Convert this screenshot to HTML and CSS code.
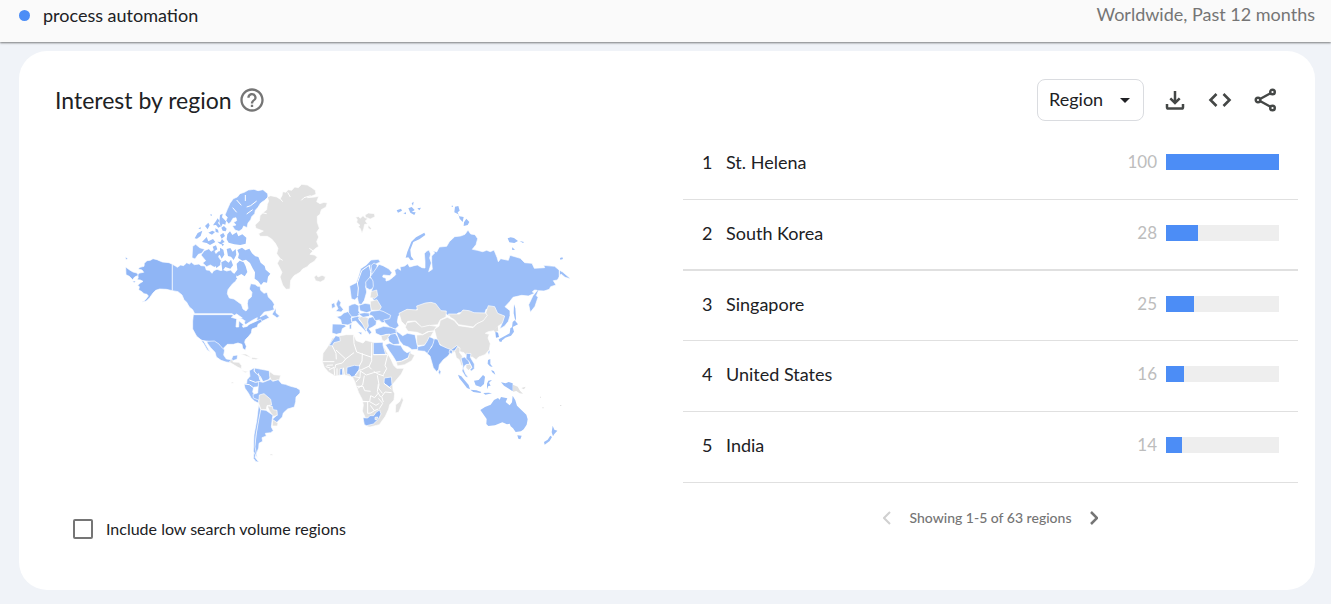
FILE: index.html
```html
<!DOCTYPE html>
<html lang="en">
<head>
<meta charset="utf-8">
<meta name="viewport" content="width=device-width, initial-scale=1">
<title>Interest by region</title>
<link rel="stylesheet" href="styles.css">
</head>
<body>
<header class="topbar">
  <div class="term"><span class="dot"></span>process automation</div>
  <div class="scope">Worldwide, Past 12 months</div>
</header>
<main class="card">
  <div class="card-head">
    <h1 class="title">Interest by region</h1>
    <button class="icon-btn help" aria-label="Help">
      <svg width="28" height="28" viewBox="0 0 24 24" fill="currentColor"><path d="M11 18h2v-2h-2v2zm1-16C6.480 2 2 6.480 2 12s4.480 10 10 10 10-4.480 10-10S17.520 2 12 2zm0 18c-4.410 0-8-3.590-8-8s3.590-8 8-8 8 3.590 8 8-3.590 8-8 8zm0-14c-2.210 0-4 1.790-4 4h2c0-1.100.9-2 2-2s2 .9 2 2c0 2-3 1.750-3 5h2c0-2.250 3-2.500 3-5 0-2.210-1.790-4-4-4z"/></svg>
    </button>
    <div class="tools">
      <div class="select-wrap">
        <select class="select" aria-label="Resolution"><option>Region</option></select>
        <svg class="caret" width="10" height="5" viewBox="0 0 10 5"><path d="M0 0h10L5 5z" fill="#202124"/></svg>
      </div>
      <div class="actions">
        <button class="icon-btn" aria-label="Download">
          <svg width="24" height="24" viewBox="0 0 24 24" fill="none" stroke="currentColor" stroke-width="2.500"><path d="M12 3v12M7.300 10.300l4.700 4.700 4.700-4.700M4 16v3.200q0 1.300 1.300 1.300h13.400q1.300 0 1.300-1.300V16"/></svg>
        </button>
        <button class="icon-btn" aria-label="Embed">
          <svg width="24" height="24" viewBox="0 0 24 24" fill="none" stroke="currentColor" stroke-width="2.600"><path d="M8.500 6l-6 6 6 6M15.500 6l6 6-6 6"/></svg>
        </button>
        <button class="icon-btn" aria-label="Share">
          <svg width="24" height="24" viewBox="0 0 24 24" fill="none" stroke="currentColor" stroke-width="2.400"><circle cx="19.500" cy="4" r="2.300"/><circle cx="5" cy="12" r="2.300"/><circle cx="19.500" cy="20" r="2.300"/><path d="M7 11l10.500-5.800M7 13l10.500 5.800"/></svg>
        </button>
      </div>
    </div>
  </div>
  <div class="panels">
    <section class="map-panel">
      <svg class="map" viewBox="0 0 1350 855" role="img" aria-label="World map">
        <!-- North America -->
        <g class="land" transform="translate(300 -15)">
          <path class="deep" d="M-143 268l-10-5-20-2-16-7-12-3-8 5-10 1-8 8-1 9-12 3-6 5 12 3 5 7-12 2-8 6 4 6-3 8 9 1 8 4-8 5-8 7 5 4-2 10 8 4 8 7 9 2 4 5-10 13-10 6 14-4 10-10 10-14 8-8 12-4 20 1L-143 347z"/>
          <path class="deep" d="M-283 276l12 9 10 6 12 3 4 7-11 5-6 8-10-10-10-5zM-284 245l8 6-6 3zM-262 318l9 0-4 6z"/>
          <path d="M-143 268l8 4 7 5 10-7 9 2 9-9 8 4 6-5 9 7 14-2 6 5 12 1 4 12 9 1 8 9 5-8 10-4 12 4 7-3 10 4 12-3 8 9 11 4 L48 318 38 326 30 336 24 344 22 356 28 369 42 372 53 380 64 388 69 402 78 408 84 400 82 386 84 374 94 366 96 352 88 342 92 326 105 328 113 334 120 334 122 346 132 355 141 352 145 366 157 378 163 388 160 396 163 404 150 408 133 411 120 426 138 418 148 428 132 436 119 442 110 436 112 428 100 434 84 444 76 450 70 434 52 428 36 416 -76 416 -82 404 -92 396 -100 382 -108 374 -114 360 -126 350 -143 347z"/>
          <path d="M156 418l12-19 0 14 11 10-8 6-6-5z"/>
          <path class="deep" d="M-80 419L36 419 50 430 60 440 76 454 92 446 110 438 122 432 126 440 114 448 112 456 96 462 94 474 86 484 76 494 74 502 79 514 76 526 68 520 66 508 54 504 40 508 22 508 12 518 10 530 0 521 -8 508 -18 510 -30 500 -55 496 -70 484 -82 462 -82 438z"/>
          <path class="water" d="M34 427l16-10 17 12-15 3zM50 433l7 0-1 23-8 0zM61 432l15 6-9 6zM67 452l20-6-5 8-13 3z"/>
          <path d="M-84 248l2-34 9-6 12 10 15 5-9 12-10 3-10 14z"/>
          <path d="M-57 240l10-13 14-6 6 8 10-6 4 12 10-4-1 18 8 8-4 13-10 1-7 6-12-7-11 5-12-11 9-7z"/>
          <g class="islets">
            <path d="M-76 190l9-16 14-7-5 16-11 8zM-45 153l10-10 4 8-6 12zM-54 201l14-15 5 13 14-7 7 9-16 9-10-6zM-12 138l5-8 5 7-4 7 9 10-8 4-7-8-9 1zM-35 173l12-6 8 4-9 8zM0 180l10-6 5 9-10 8zM-8 200l9 1 5-9 8 9-13 7zM-22 215l10-4 4 12-9 6zM-14 160l8 4 2 9-9-2zM-65 160l8-3-2 6zM-30 120l4-3 2 6zM-8 232l7-5 2 12-8 4zM2 204l10 4-4 6z"/>
            <path d="M0 120l8-4-2 11 12 12-2 10-8-3-5 10-5-14zM4 158l8-5 8 8-3 8-9-2zM22 178l8-9 7 11 13-8 5 12 12-6 12 10-2 18-16 4-18-2-17-5-6-10zM0 218l10 6 3 15-8 12-5-10zM20 222l11-3 7 11 9-8 2 17-8 16-8-10-9-2zM52 225l14-7 10 8 12-5 8 14 10 9 9 2 7 17 12 10 3 11 14 12-7 9-3 18-10-2-8 9-9-12-10-7 1-19-7-12-8-16-12-10-11 3-13-8 3-12zM50 266l9-9 12 5 6 12 5 17-8 13-10-7-12 7-9-8 9-12zM4 262l12-6 10 7 7-9 6 17-8 10-15-5-9 12zM-20 250l10 4 7-8 4 24-12 9-5-12zM32 305l12-2 8 8-14 8z"/>
          </g>
          <path d="M22 103l8-18 10-14 12-5 8-10 13-4 12-7 17-2 12 4 15-3 14 12 1 10-10 10-12 8-8 13-8 9-2 10-9 9-3 9-8 10-3 14-10-5-4 9-10 7-12-4-8-12 11-3-7-8 9-5-2-9-9 2-6 10-7 7-8-10 4-10-7-7z"/>
          <path class="water thin" d="M50 75l14 16M76 60l0 18M110 78l-18 14-12 4M38 98l12 14M98 104l-18 13"/>
          <path class="none" d="M105 150L118 138 120 122 130 112 140 104 142 88 146 78 142 66 152 62 170 66 180 72 186 62 188 50 198 52 204 44 215 46 224 36 235 38 245 28 262 30 275 38 286 46 288 58 262 68 285 66 296 64 290 80 300 86 312 82 322 84 318 96 304 104 300 118 292 124 292 142 298 160 290 172 296 186 290 200 296 214 284 222 270 238 283 240 292 246 284 258 268 268 262 275 248 282 240 292 222 302 212 316 210 342 198 343 188 330 180 306 186 292 172 265 180 250 170 236 174 220 166 205 155 192 142 184 120 184 116 176 130 168 108 160z"/>
          <path class="water thin" d="M176 66l12 14M203 52l8 14M272 62l-20 6-8 8M280 228l-12-8M178 250l10 6M120 112l20 4"/>
          <path class="none" d="M282 306l8-6 4 6 12-5 10 4-2 9-13 7-14-4z"/>
        </g>
        <!-- Mexico, Central and South America -->
        <g class="land" transform="translate(210 480)">
          <path d="M50 4l23-1 14 9 6 8 11 10-3 15 8 12 15 2 5-12 14-2-2 13-10 3-7 7-16-2-15-5-14-10-4-14-13-14-9-12zM33 0l8 3 9 16 11 18-10-8-9-16z"/>
          <path class="none" d="M118 66l8-8 4 8 17 1 8 10-1 9-10-4-10-6zM153 91l14 3 9 0-10 4zM152 42l16 0 18 12-16-5zM186 52l20 3-8 4-14-2z"/>
          <path d="M178 92l15-9-1 11 9 7 11 6-1 16-6 17-14 2-3 14 7 9 11 5 1 20-13-6-11-11-8-14-10-14-3-13 8-2 1-11 9-10z"/>
          <path d="M194 84l20 4 23 4 7 15-8 12-17 6-8-16-11-7-7-9z"/>
          <path class="none" d="M238 94l14 10 20 2-4 14-23 3-6-13z"/>
          <path d="M206 124l13 3 23-9 6 6 17-5 10 12 11 2 16 6 17 4 11 7 0 9-12 12-1 14-4 16-20 6-13 12-3 12-13 13-5 5-12-11 13-12-2-10-12-7-5-12-16-15-20-2-15-6-1-11 14-4z"/>
          <path class="none" d="M208 165l14-4 20 17 3 17-14 2-2 12-16 0-7-18zM232 198l15 1 2 10 12 2 1 15-12 4-12-18zM247 238l17 12-2 8-15 0z"/>
          <path d="M211 209l17 2 21 15-2 10-2 17-1 8 6 11-8 6-16 2 3 8-13 5 2 11-11 6-1 14-6 15-5 13 8 10 5 4-10-1-8-10 4-38 8-62z"/>
          <path d="M206 194l6 15-6 32-8 44-3 35 5 25 3 10-13-21 2-49 8-43z"/>
          <path class="none" d="M124 126h6v4h-6zM240 342h8v4h-8z"/>
          <path class="border" d="M163 132l15 2 12 9M178 120l18 7 10-2M205 100l5 20"/>
        </g>
        <!-- Arctic islands, Scandinavia and Russia -->
        <g class="land" transform="translate(585 -15)">
          <path class="none" d="M122 126l9-1 5 5 8-8 7 7 9 0-9 9 7 9-9 1-3 13-5 14-5-14-6-6 5-4-10-9 2-8zM150 120l10-6 18 2 2 9-14 7-14-4zM160 150l9 10-2 4-8-5z"/>
          <g class="islets">
            <path d="M245 106l13-5 3 6-12 6zM280 100l10-4 9 9-9 6 12 1-4 8-12-7zM290 85l6-5-2 12zM265 115l8-3 0 6zM307 100l11-2-5 8z"/>
            <path d="M272 248l5-18 12-30 14-13 25-14 3 7-18 13-18 8-9 23 2 20 8 10-9 2-7-9z"/>
          </g>
          <path d="M104 333l20-10 7-21 6-21 18-12 13-14 22-2 6 8-12 5 1 14-11 18-4 13-10 4-8 20 3 16-7 25-9 13-8-3-4-19-8 8-10-4z"/>
          <path d="M168 272l9-8 10 6-1 22 9 29-13 17-18 6-11-6-1-17 13-15 6-14z"/>
          <path class="border" d="M128 364l2-25-3-15 13-37 18-13 8-4M167 310l0-20-4-17M192 266l-6 10"/>
          <path d="M192 268l12 4 18 10 9 11-6 9-20-2-2 6 10 4 0 8 10-3 12-9 7-7-3-14 9-5 9 6-2-10 14-3 9-7 6 10 13-4 10-2 14 8 9 1 0-20-2-23 6-7 8-4 5 12-3 12 5 15-4 13-4 13 11-7-2-20 0-20 9-9-6-7 12 4 8-15 22-2 8-14 16-15 18-2 13-5 9-13 8 12 13 2 8 12-5 18-11 14 15 3 16 4 12-4 11 4 11-5 9 22 4 13 7-9 23 5 5-15 18 5 13 4 13 13 22 2 7 15 31-2-3-7 33 3 12 10 12 7L768 312 750 307 738 297 727 315l-12 2 8 13-16 5-4 8-16 5-17-1-6 15 5 5-9 27-14 18-5-23 13-27 13-16-9-1-6 6 7 4-19 8-20-2-26 6-10 13-14 15 15 12 0 15-5 17-11 14-15 9 6-14-1-14-18-9-11-23-17 1-6 22-17-3-25-1-19-10-17 3-8 9-18 0-15-8-12 4-15-21-13-7-17-2-18 6-18 20-30 0-15 8-3 18 5 11-12 11-16-7-14-13-18-6 9-11 14-4-9-9-15-4-8-4 1-19-12-16-4-19 7-17-1-16-8-13z"/>
          <g class="islets">
            <path d="M420 95l10-2 4 14-6 5 5 12 13 2-3 15-9-10-4-13-12-6zM447 142l7-11 9 10-5 9-12 3zM578 190l9-3 10 2 12 9-11 6-15-2zM614 198l13 3-3 3zM592 217l8 8-9-1zM735 249l7-2 2 5-8 2zM410 92h4v3h-4z"/>
          </g>
          <path class="border" d="M733 273v38"/>
          <path class="none" d="M168 350l17-5 3 17-8 8-15-2z"/>
        </g>
        <!-- Europe, Africa and Asia -->
        <g class="land" transform="translate(585 330)">
          <path d="M63 42l7-14 8 10-3 8 10 12-6 8-17-2 7-8zM49 42l9-4 3 12-10 6z"/>
          <path d="M52 102l35 1 7 6-12 7-3 13-15 4-13-4z"/>
          <path d="M64 80l14-3 8-8 12-4 16 11-6 9 4 14-13 6-19-2-3-14z"/>
          <path d="M101 48l11-5 8-2 12 6-1 16 5 8-12 10-14-1-9-12z"/>
          <path d="M132 46l18-6 18 3 1 20-14 5-20-6z"/>
          <path d="M110 83l18-4 12 2-8 8 11 13 16 13-6 2 0 10-7-9-15-15-9-10-12 3zM103 103h7l-1 14h-6zM128 126l13 1-2 8z"/>
          <path d="M160 84l18-5 7 10-2 15-12 8-9 4 8 11-6 7-10-13 2-16-4-11z"/>
          <path class="none" d="M130 84l14-7 16 7-2 12 2 12-8 12-10-19z"/>
          <path d="M130 71l18-3 19 2-5 9-18 3z"/>
          <path class="none" d="M166 34l20-5 13 22-6 10-24 0-3-16z"/>
          <path d="M167 64l26-3 11 3 23 12-3 10-18 4 4 7-9 1-8-8-12 2-8-14-11-4z"/>
          <path d="M180 118l26-9 21 3 18 7 1 10-16 5-15-1-15 5-18-8z"/>
          <path class="none" d="M198 137l26-5-5 14-11 8-7-4z"/>
          <path d="M219 142l8-9 14-3 8 12 5 20-19 2-13-10z"/>
          <path d="M242 122l12 8 9 7 14-7 23 4 5 22 6 22-20 1-11-8-15-5-10-12-7-15z"/>
          <path d="M211 164l12-4 16 5 18 1 9 15 10 7 10-4 2 7-8 12-20 10-16 2-11-18-10-14z"/>
          <path class="none" d="M244 216l15-2 20-9 5-17 15 8-9 16-21 12-22 4z"/>
          <path class="none" d="M252 70l24-12 31 2-2-12 26-9 17-2 14 4 16 21 16 1-1 18-17 8-8 15-28 3-20 6-18-20-24 1-6 13-13-13z"/>
          <path class="none" d="M276 98l24-4 20 17 23-5 22 3-8 14-20 2-14 9-16-7-28-3-8-12zM305 135l18-1 18-9 16-2-12 20-14 22-24 2-2-17z"/>
          <path class="none" d="M400 72l34 0 10-12 18 2 15 6 35 1 7 6-12 17-23 10-9 9-44-7-13-15-12-7z"/>
          <path class="none" d="M358 118l14-10 4-17 21-9 20 9 14 16 43 6 12-12 19-9 12-16-5-7 8-22 19 3 9 20 21 8-7 22-13 9-11 13-18 3-9 5 12 3-4 11 7 17-3 18-13 15-19 7-8 8-11-8-14 2-11-15-16-4-22 4-25-17-16-14z"/>
          <path d="M308 170l20-4 8-12 7-14 14 6 4 13-12 11-4 12-4 12-12-10-21-2z"/>
          <path class="deep" d="M358 146l10 2 7 17 22 10 12 4 16-12 7 5-13 10-10 2-10 14-14 11-12 15-2 14-6 7-10-12-10-35-8-7 5-10 8-10 5-12z"/>
          <path d="M372 238l6 7-3 9-5-6zM404 180l9 2-2 10-9-4z"/>
          <path class="none" d="M419 184l8-14 8 4-1 14 8 10-1 16 4 11-6 2-6-18-9-6z"/>
          <path d="M438 205l10-4 13 8 3 14-14 3-5 9 7 17 8 10-8-1-11-18 3-15z"/>
          <path d="M454 190l14 1-2 11 12 20 0 14-10 8-3-6 6-5-9-19-9-8z"/>
          <path class="none" d="M453 224l12-2 5 10-9 9-8-7z"/>
          <g class="islets">
            <path class="deep" d="M541 125l8 3 3 13-9 2z"/>
            <path class="none" d="M536 120l12-12 2 14-10 5z"/>
            <path d="M593 96l6-5 10 12-10 5-8 4zM593 110l4 15-9 12-17 6-8 7-10 4-2-6 17-9 16-9 2-15zM555 149h7l-2 6h-6zM597 43l4 12 2 30-2 8-5-23z"/>
            <path d="M520 186l4-5-2 13zM519 210l7-3 0 15 7 9-8-2-7-8zM529 240l8 4 4 10-10-8z"/>
            <path d="M429 254l10 5 10 12 12 14 4 13-9-4-12-16-11-13zM466 299l18 2 15 5-3 3-21-3zM477 272l14-2 13-15 6 5-3 22-10 9-15-5zM516 281l4-9 11-2-9 8 5 9-7 1-4 10zM558 277l14 3 9-4 12 4 0 24-15-10-11-7zM505 309l16-1 10 2-20 4z"/>
            <path class="none" d="M594 284l14 6 7 12 9 9-10-1-10-7-10 2zM619 294l13-4-5 8zM675 320h3v3h-3zM735 345h4v3h-4zM682 352h4v3h-4z"/>
            <path d="M496 360l14-9 17-7 10-14 12-6 5 5 4-8 19 4-5 11 12 10 7-9 2-20 8 14 5 16 14 14 14 13 4 14-3 16-9 14-8 6-16 2-8-11-7-6-3-8-8 2-14-6-22 9-20 2-6-6 1-15z"/>
            <path d="M607 436l13 1-4 11-6-2zM713 407l5 12 9 3-9 10-4 7-4-12zM706 437l5 4-7 12-15 11-2-8 11-7z"/>
          </g>
          <!-- Africa -->
          <path class="none" d="M52 144l23-7 19-3 22 0 8 18 20 7 8-8 22 6 26 1 9 17 9 16 10 17 8 18 9 9 22 0-8 17-17 20-9 11 1 18 5 10-2 19-13 14-3 13-10 22-18 25-28 7-8-1-4-22-11-25 3-18-4-18-10-19L118 272 112 260 98 257 84 254 60 258 40 246 28 232 22 215 24 190 38 170z"/>
          <path class="none" d="M242 344l11-8 8-16 4 11-7 19-7 17-10 2z"/>
          <path d="M42 167l8-13 12-17 12 3 2 13-19 5-5 9z"/>
          <path d="M175 158l29-1 0 9 8 27-37 1z"/>
          <path class="deep" d="M75 236l7-1 1 20-9 0zM96 232l22-6 16 2-3 15-9 14-12 4-7-8-8-1z"/>
          <path class="deep" d="M208 264l21-3 2 23-8 8-16-12z"/>
          <path class="deep" d="M144 383l14 1 7-7 11 0 8-11 10-6 4 12-8 16-15 14-20 5-7-3z"/>
          <path class="none" d="M180 382l8-1-2 8-6 0z"/>
          <path class="border" d="M52 168l11 22 1 18M63 180l29 27 25-19M116 136l1 25 8 25 45 16v-44M92 207l-10 12-20 5-2 10M170 194v18l-8 18 8 8M175 194l43 0-8 32 5 10-10 18M22 215h36M35 226l19-1M32 230l14 4M42 240l15-8 2 23M66 235v21M85 233l3 22M133 228l8-15 1-23M120 256l11-15 9-2 25-12M118 260l17 3 1-20 18 12 22-7 20-3M207 258l-18-6-13-8M187 256l5 28-2 10 12 16M135 263l-13 14M148 257l-5 28-15 10M126 289h18l5 13 18 2M190 282l-3 23 10 16M127 333l37 2 3-18 12 6 12-15M230 308l-20-2-10 14 5 16M207 280l22 17M190 325l13 15-10 16M164 335l19 11 10-6M158 335v35l10-1 10-7M178 362l-12-16M135 335l20 0M178 362l12-5"/>
        </g>
      </svg>
      <label class="check"><input type="checkbox" class="box">Include low search volume regions</label>
    </section>
    <section class="list-panel">
      <ol class="list">
        <li class="row"><span class="rank">1</span><span class="name">St. Helena</span><span class="value">100</span><span class="bar"><span class="fill" style="width:100%"></span></span></li>
        <li class="row row-strong"><span class="rank">2</span><span class="name">South Korea</span><span class="value">28</span><span class="bar"><span class="fill" style="width:28%"></span></span></li>
        <li class="row row-tight"><span class="rank">3</span><span class="name">Singapore</span><span class="value">25</span><span class="bar"><span class="fill" style="width:25%"></span></span></li>
        <li class="row"><span class="rank">4</span><span class="name">United States</span><span class="value">16</span><span class="bar"><span class="fill" style="width:16%"></span></span></li>
        <li class="row"><span class="rank">5</span><span class="name">India</span><span class="value">14</span><span class="bar"><span class="fill" style="width:14%"></span></span></li>
      </ol>
      <nav class="pager" aria-label="Pages">
        <button class="page-btn prev" aria-label="Previous" disabled><svg width="8" height="14" viewBox="0 0 8 14"><path d="M7 1L1 7l6 6" fill="none" stroke="currentColor" stroke-width="2"/></svg></button>
        <span>Showing 1-5 of 63 regions</span>
        <button class="page-btn" aria-label="Next"><svg width="8" height="14" viewBox="0 0 8 14"><path d="M1 1l6 6-6 6" fill="none" stroke="currentColor" stroke-width="2.500"/></svg></button>
      </nav>
    </section>
  </div>
</main>
</body>
</html>
```
FILE: styles.css
```css
* { box-sizing: border-box; }
body {
  margin: 0;
  background: #f0f3f8;
  color: #202124;
  font-family: Lato, "Open Sans", sans-serif;
}
button { border: 0; background: none; padding: 0; color: inherit; font: inherit; }
.topbar {
  display: flex;
  justify-content: space-between;
  height: 42px;
  padding: 2px 16px 0 19px;
  background: #fafafa;
  box-shadow: 0 1px 2px rgba(0, 0, 0, .5);
  font-size: 18px;
  line-height: 24px;
}
.term { display: flex; align-items: center; gap: 13px; height: 26px; }
.dot { width: 11px; height: 11px; border-radius: 50%; background: #4c8df6; }
.scope { color: #757575; }
.card {
  margin: 9px 16px 13px 19px;
  padding: 28px 17px 51px 36px;
  background: #fff;
  border-radius: 28px;
}
.card-head { display: flex; align-items: center; height: 42px; }
.title { margin: 0; font-size: 23px; font-weight: 400; line-height: 28px; }
.icon-btn { display: flex; color: #444746; }
.icon-btn svg { display: block; }
.help { margin-left: 6px; color: #757575; }
.tools { display: flex; align-items: center; gap: 19px; margin: 0 21px 0 auto; }
.actions { display: flex; gap: 21px; }
.select-wrap { display: grid; align-items: center; }
.select {
  grid-area: 1 / 1;
  appearance: none;
  width: 107px;
  height: 42px;
  padding: 0 0 3px 11px;
  border: 1px solid #dadce0;
  border-radius: 8px;
  background: #fff;
  color: #202124;
  font: inherit;
  font-size: 18px;
}
.caret { grid-area: 1 / 1; justify-self: end; margin-right: 14px; pointer-events: none; }
.panels { display: grid; grid-template-columns: 580fr 615fr; gap: 48px; }
.map-panel { padding-top: 59px; }
.map { display: block; width: 100%; max-width: 450px; margin: 0 auto; }
.land path { fill: #9bbef8; stroke: #fff; stroke-width: 2; stroke-linejoin: round; }
.land .deep { fill: #8fb5f5; }
.land .none { fill: #e1e1e1; }
.land .water { fill: #fff; }
.land .thin { fill: none; stroke-width: 3; }
.land .border { fill: none; stroke-width: 3; }
.islets path { stroke-width: 0; }
.check {
  display: flex;
  align-items: center;
  gap: 13px;
  width: max-content;
  margin: 54px 0 0 18px;
  font-size: 16px;
  line-height: 20px;
}
.box {
  appearance: none;
  width: 20px;
  height: 20px;
  margin: 0;
  border: 2px solid #757575;
  border-radius: 2px;
}
.list-panel { padding-top: 8px; }
.list { margin: 0; padding: 0; list-style: none; }
.row {
  display: flex;
  align-items: center;
  height: 71px;
  padding: 0 19px 4px;
  border-bottom: 1px solid #e0e0e0;
  font-size: 18px;
  line-height: 24px;
}
.row-strong { border-bottom-width: 2px; }
.row-tight { height: 70px; }
.rank { width: 24px; }
.name { flex: 1; }
.value { margin-right: 9px; color: #bdbdbd; font-size: 17px; }
.bar { width: 113px; height: 16px; background: #eee; }
.fill { display: block; height: 100%; background: #4c8df6; }
.pager {
  display: flex;
  justify-content: center;
  align-items: center;
  gap: 19px;
  margin-top: 25px;
  color: #757575;
  font-size: 14px;
  font-weight: 500;
  line-height: 20px;
}
.page-btn { display: flex; color: #757575; }
.prev { color: #d0d0d0; }
```
